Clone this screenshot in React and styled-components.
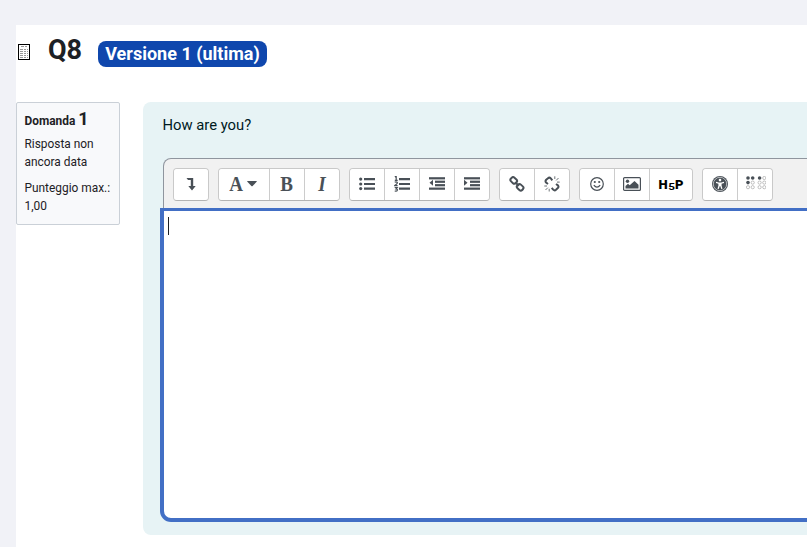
import React from "react";
import styled, { createGlobalStyle } from "styled-components";

const GlobalStyle = createGlobalStyle`
  * { box-sizing: border-box; }
  body { margin: 0; background: #f1f2f7; font-family: Roboto, sans-serif; color: #1d2125; overflow: hidden; }
`;
const Page = styled.div`
  height: 547px;
  padding: 25px 0 0 16px;
  overflow: hidden;
`;
const Main = styled.main`
  height: 522px;
  background: #fff;
`;
const Header = styled.header`
  display: flex;
  height: 77px;
  align-items: flex-start;
`;
const PageIcon = styled.svg`
  width: 12px;
  height: 16px;
  margin: 19px 0 0 2px;
  flex: none;
`;
const Title = styled.h1`
  margin: 8px 0 0 18px;
  width: 34px;
  font-size: 27px;
  line-height: 34px;
  font-weight: 700;
`;
const Badge = styled.span`
  margin: 16px 0 0 16px;
  width: 169px;
  height: 26px;
  border-radius: 8px;
  background: #0f47ad;
  color: #fff;
  font-size: 18px;
  font-weight: 700;
  line-height: 26px;
  text-align: center;
  white-space: nowrap;
`;
const Question = styled.section`
  display: flex;
  align-items: flex-start;
  gap: 23px;
`;
const Info = styled.aside`
  flex: none;
  width: 104px;
  height: 123px;
  padding: 5px 0 0 7.5px;
  border: 1px solid #cad0d7;
  border-radius: 2px;
  background: #f8f9fb;
  font-size: 11.9px;
  line-height: 18px;
`;
const Number = styled.h2`
  margin: 0 0 5px;
  font-size: 11.9px;
  line-height: 22px;
  height: 22px;
  font-weight: 700;
  span { font-size: 18px; }
`;
const Detail = styled.div`
  margin-bottom: 8px;
`;
const Formulation = styled.div`
  flex: none;
  width: 720px;
  height: 433px;
  padding: 12px 0 0 20px;
  border-radius: 8px;
  background: #e7f3f5;
  color: #001a1e;
`;
const Prompt = styled.p`
  margin: 0 0 0 -0.5px;
  height: 44px;
  font-size: 14.8px;
  line-height: 23px;
`;
const Toolbar = styled.div`
  display: flex;
  gap: 9px;
  height: 51px;
  padding: 9px 0 0 9px;
  border: 1px solid #8f959e;
  border-bottom: 0;
  border-radius: 8px 0 0 0;
  background: #f1f1f1;
`;
const Group = styled.div`
  display: flex;
  height: 33px;
  border: 1px solid #c9c9c9;
  border-bottom-color: #b3b3b3;
  border-radius: 4px;
  overflow: hidden;
`;
const Tool = styled.button`
  display: flex;
  align-items: center;
  justify-content: center;
  width: ${(p) => p.$width || 35}px;
  height: 31px;
  padding: 0 1px 2px 0;
  border: 0;
  border-right: 1px solid #ccc;
  background: #fff;
  color: #495057;
  &:last-child {
    border-right: 0;
    width: ${(p) => (p.$width || 35) - 1}px;
  }
`;
const Letter = styled.span`
  font: ${(p) => (p.$italic ? "italic" : "normal")} bold 20px/20px "Liberation Serif", serif;
  transform: scaleX(0.95);
`;
const Icon = styled.svg`
  width: ${(p) => p.$w || 16}px;
  height: ${(p) => p.$h || 16}px;
  flex: none;
  fill: currentColor;
`;
const Caret = styled(Icon)`
  margin: 0 1px 0 4px;
`;
const BrailleIcon = styled(Icon)`
  margin-left: 3px;
`;
const Logo = styled.span`
  display: flex;
  align-items: center;
  color: #000;
  font: 900 13px/14px Roboto, sans-serif;
  margin: 3px 0 0 1px;
  b { font-size: 9px; font-weight: 700; margin: 3px 1px 0; transform: scaleX(1.3); }
`;
const Editor = styled.div`
  height: 314px;
  margin: -1px 0 0 -3px;
  padding: 6px 0 0 4px;
  border: 4px solid #426fc5;
  border-top-width: 3px;
  border-radius: 0 0 0 11px;
  background: #fff;
`;
const Cursor = styled.div`
  width: 1px;
  height: 18px;
  background: #1d2125;
`;

const Lines = ({ indents }) => indents.map((x, i) => (
  <rect key={i} x={x} y={2 + i * 3.45} width={16 - x} height="2.2" />
));

const Numbers = () => (
  <g fill="none" stroke="currentColor" strokeWidth="1.2">
    <path d="M.8.9 2.2.2v4.2M.8 4.4h2.9" />
    <path d="M.7 6.3Q2 5.3 3.1 6.2T.8 9.6h2.8" />
    <path d="M.7 11.5h2.5l-1.2 1.4q1.7 0 1.3 1.4-.3 1.1-2.6.7" />
  </g>
);

const Chains = ({ broken }) => (
  <g fill="none" stroke="currentColor" strokeWidth="2">
    {broken ? (
      <>
        <path d="M8.3 4.3 6.8 2.4Q5.4 1 4 2.2L2.2 3.8Q.9 5.2 2.1 6.6L4 8M7.7 11.8l1.5 1.8q1.4 1.4 2.8.2l1.8-1.7q1.3-1.4.1-2.8L12 8" />
        <path d="M10.8 3V.3M12.2 4.4 14.5 2M13 6.1h2.7M5.2 12.8v2.7M3.8 11.7 1.5 14M3 10H.3" strokeWidth=".8" />
      </>
    ) : (
      <>
        <rect x="1.4" y="2" width="6.6" height="5" rx="2" transform="rotate(43 4.8 4.5)" />
        <rect x="7.8" y="8.9" width="6.6" height="5" rx="2" transform="rotate(43 11.2 11.4)" />
        <path d="m6.2 6.2 3.7 3.7" />
      </>
    )}
  </g>
);

const brailleDots = [
  [2, 2, 1], [6.7, 2, 1], [2, 6.6, 1], [6.7, 6.6, 0], [2, 11.2, 0], [6.7, 11.2, 0],
  [13.6, 2, 1], [18.3, 2, 0], [13.6, 6.6, 0], [18.3, 6.6, 0], [13.6, 11.2, 0], [18.3, 11.2, 0],
];

export default function App() {
  return (
    <Page>
      <GlobalStyle />
      <Main>
        <Header>
          <PageIcon viewBox="0 0 12 16">
            <rect x=".5" y=".5" width="11" height="15" fill="#fff" stroke="#000" />
            <path d="M3 2.5h6M2 5.5h8M2 7.5h8M2 9.5h8M2 11.5h8M2 13.5h8" stroke="#999" strokeDasharray="3 1 2 1" />
          </PageIcon>
          <Title>Q8</Title>
          <Badge>Versione 1 (ultima)</Badge>
        </Header>
        <Question>
          <Info>
            <Number>Domanda <span>1</span></Number>
            <Detail>Risposta non<br />ancora data</Detail>
            <Detail>Punteggio max.:<br />1,00</Detail>
          </Info>
          <Formulation>
            <Prompt>How are you?</Prompt>
            <Toolbar>
              <Group>
                <Tool>
                  <Icon $w={10} $h={14} viewBox="0 0 10 14"><path d="M.5 1h6.7v8h2.5L6 13.5 2.3 9h2.5V3H2z" /></Icon>
                </Tool>
              </Group>
              <Group>
                <Tool $width={51}>
                  <Letter>A</Letter>
                  <Caret $w={10} $h={6} viewBox="0 0 10 6"><path d="M.6 0h8.8q.8.1.2.8L5.6 4.9q-.6.6-1.2 0L.4.8Q-.2.1.6 0" /></Caret>
                </Tool>
                <Tool><Letter>B</Letter></Tool>
                <Tool><Letter $italic>I</Letter></Tool>
              </Group>
              <Group>
                <Tool>
                  <Icon viewBox="0 0 16 16">
                    <path d="M5 2h11v2.2H5zM5 6.9h11v2.2H5zM5 11.5h11v2.2H5z" />
                    <circle cx="1.7" cy="3.1" r="1.6" /><circle cx="1.7" cy="8" r="1.6" /><circle cx="1.7" cy="12.6" r="1.6" />
                  </Icon>
                </Tool>
                <Tool>
                  <Icon viewBox="0 0 16 16">
                    <path d="M5 2h11v2.2H5zM5 6.9h11v2.2H5zM5 11.5h11v2.2H5z" />
                    <Numbers />
                  </Icon>
                </Tool>
                <Tool>
                  <Icon viewBox="0 0 16 16"><g transform="translate(0 -.8)"><Lines indents={[0, 6, 6, 0]} /><path d="M4 4.6v6L.5 7.6z" /></g></Icon>
                </Tool>
                <Tool>
                  <Icon viewBox="0 0 16 16"><g transform="translate(0 -.8)"><Lines indents={[0, 6, 6, 0]} /><path d="M0 4.6v6l3.5-3z" /></g></Icon>
                </Tool>
              </Group>
              <Group>
                <Tool><Icon viewBox="0 0 16 16"><Chains /></Icon></Tool>
                <Tool><Icon viewBox="0 0 16 16"><Chains broken /></Icon></Tool>
              </Group>
              <Group>
                <Tool>
                  <Icon $w={14} $h={14} viewBox="0 0 14 14">
                    <circle cx="7" cy="7" r="6.3" fill="none" stroke="currentColor" strokeWidth="1.2" />
                    <circle cx="4.8" cy="5" r="1.1" /><circle cx="9.2" cy="5" r="1.1" />
                    <path d="M3.8 8.2q3.2 4 6.4 0" fill="none" stroke="currentColor" strokeWidth="1.2" />
                  </Icon>
                </Tool>
                <Tool>
                  <Icon $w={18} $h={14} viewBox="0 0 18 14">
                    <rect x=".6" y=".6" width="16.8" height="12.8" rx="1" fill="none" stroke="currentColor" strokeWidth="1.2" />
                    <circle cx="4.5" cy="4.2" r="1.7" />
                    <path d="M2.5 11.5V9L5 6.7l1.7 1.6L11.5 4l4 3.8v3.7z" />
                  </Icon>
                </Tool>
                <Tool $width={43}><Logo><span>H</span><b>5</b><span>P</span></Logo></Tool>
              </Group>
              <Group>
                <Tool>
                  <Icon viewBox="0 0 16 16">
                    <circle cx="8" cy="8" r="8" />
                    <circle cx="8" cy="8" r="6.7" fill="none" stroke="#fff" strokeWidth=".6" />
                    <circle cx="8" cy="4.1" r="1.3" fill="#fff" />
                    <path d="m4 5.7 2.8.7h2.4l2.8-.7v1.2l-2.4.8v2l.9 3-1.2.2L8.2 10h-.4l-1.1 2.9-1.2-.2.9-3v-2L4 6.9z" fill="#fff" />
                  </Icon>
                </Tool>
                <Tool>
                  <BrailleIcon $w={20} $h={15} viewBox="0 0 20 15">
                    {brailleDots.map(([x, y, filled]) => (
                      <circle key={`${x}-${y}`} cx={x} cy={y} r={filled ? 1.8 : 1.6} fill={filled ? "currentColor" : "none"} stroke={filled ? "none" : "#999"} strokeWidth=".6" />
                    ))}
                  </BrailleIcon>
                </Tool>
              </Group>
            </Toolbar>
            <Editor><Cursor /></Editor>
          </Formulation>
        </Question>
      </Main>
    </Page>
  );
}
